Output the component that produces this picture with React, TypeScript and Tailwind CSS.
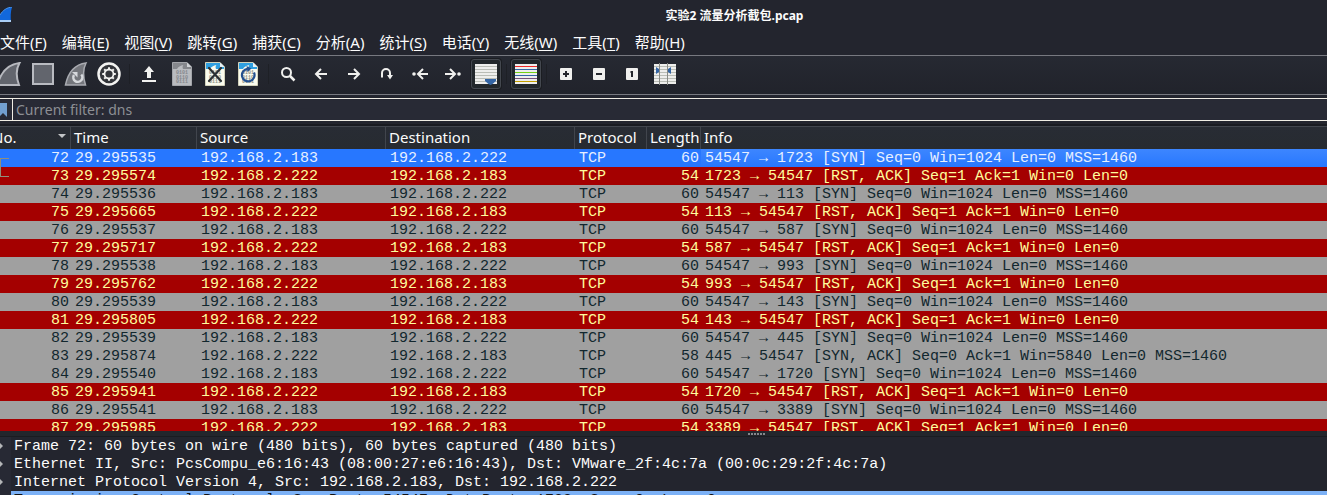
import type { ReactNode } from "react";

type Tone = "selected" | "reset" | "syn";

interface Packet {
  no: number;
  time: string;
  outbound: boolean;
  length: number;
  info: string;
  tone: Tone;
}

const SCANNER = "192.168.2.183";
const HOST = "192.168.2.222";

const packets: Packet[] = [
  { no: 72, time: "29.295535", outbound: true, length: 60, info: "54547 → 1723 [SYN] Seq=0 Win=1024 Len=0 MSS=1460", tone: "selected" },
  { no: 73, time: "29.295574", outbound: false, length: 54, info: "1723 → 54547 [RST, ACK] Seq=1 Ack=1 Win=0 Len=0", tone: "reset" },
  { no: 74, time: "29.295536", outbound: true, length: 60, info: "54547 → 113 [SYN] Seq=0 Win=1024 Len=0 MSS=1460", tone: "syn" },
  { no: 75, time: "29.295665", outbound: false, length: 54, info: "113 → 54547 [RST, ACK] Seq=1 Ack=1 Win=0 Len=0", tone: "reset" },
  { no: 76, time: "29.295537", outbound: true, length: 60, info: "54547 → 587 [SYN] Seq=0 Win=1024 Len=0 MSS=1460", tone: "syn" },
  { no: 77, time: "29.295717", outbound: false, length: 54, info: "587 → 54547 [RST, ACK] Seq=1 Ack=1 Win=0 Len=0", tone: "reset" },
  { no: 78, time: "29.295538", outbound: true, length: 60, info: "54547 → 993 [SYN] Seq=0 Win=1024 Len=0 MSS=1460", tone: "syn" },
  { no: 79, time: "29.295762", outbound: false, length: 54, info: "993 → 54547 [RST, ACK] Seq=1 Ack=1 Win=0 Len=0", tone: "reset" },
  { no: 80, time: "29.295539", outbound: true, length: 60, info: "54547 → 143 [SYN] Seq=0 Win=1024 Len=0 MSS=1460", tone: "syn" },
  { no: 81, time: "29.295805", outbound: false, length: 54, info: "143 → 54547 [RST, ACK] Seq=1 Ack=1 Win=0 Len=0", tone: "reset" },
  { no: 82, time: "29.295539", outbound: true, length: 60, info: "54547 → 445 [SYN] Seq=0 Win=1024 Len=0 MSS=1460", tone: "syn" },
  { no: 83, time: "29.295874", outbound: false, length: 58, info: "445 → 54547 [SYN, ACK] Seq=0 Ack=1 Win=5840 Len=0 MSS=1460", tone: "syn" },
  { no: 84, time: "29.295540", outbound: true, length: 60, info: "54547 → 1720 [SYN] Seq=0 Win=1024 Len=0 MSS=1460", tone: "syn" },
  { no: 85, time: "29.295941", outbound: false, length: 54, info: "1720 → 54547 [RST, ACK] Seq=1 Ack=1 Win=0 Len=0", tone: "reset" },
  { no: 86, time: "29.295541", outbound: true, length: 60, info: "54547 → 3389 [SYN] Seq=0 Win=1024 Len=0 MSS=1460", tone: "syn" },
  { no: 87, time: "29.295985", outbound: false, length: 54, info: "3389 → 54547 [RST, ACK] Seq=1 Ack=1 Win=0 Len=0", tone: "reset" },
];

const toneClass: Record<Tone, string> = {
  selected: "bg-[#2777ff] text-[#e6efff]",
  reset: "bg-[#a40000] text-[#fffc9c]",
  syn: "bg-[#a0a0a0] text-[#12272e]",
};

const menus: [string, string][] = [
  ["文件", "F"],
  ["编辑", "E"],
  ["视图", "V"],
  ["跳转", "G"],
  ["捕获", "C"],
  ["分析", "A"],
  ["统计", "S"],
  ["电话", "Y"],
  ["无线", "W"],
  ["工具", "T"],
  ["帮助", "H"],
];

const details = [
  "Frame 72: 60 bytes on wire (480 bits), 60 bytes captured (480 bits)",
  "Ethernet II, Src: PcsCompu_e6:16:43 (08:00:27:e6:16:43), Dst: VMware_2f:4c:7a (00:0c:29:2f:4c:7a)",
  "Internet Protocol Version 4, Src: 192.168.2.183, Dst: 192.168.2.222",
  "Transmission Control Protocol, Src Port: 54547, Dst Port: 1723, Seq: 0, Len: 0",
];

function Icon({ children }: { children: ReactNode }) {
  return (
    <svg width="24" height="24" viewBox="0 0 24 24" fill="none" aria-hidden="true" className="block shrink-0">
      {children}
    </svg>
  );
}

function Tool({ label, children }: { label: string; children: ReactNode }) {
  return (
    <button type="button" aria-label={label} className="flex w-[33px] shrink-0 items-center pl-1">
      <Icon>{children}</Icon>
    </button>
  );
}

function Toggle({ label, children }: { label: string; children: ReactNode }) {
  return (
    <button
      type="button"
      aria-label={label}
      aria-pressed="true"
      className="mr-0.5 ml-px flex size-[30px] shrink-0 items-center justify-center rounded-[3px] border border-[#44484f] bg-[#22272b] shadow-[0_0_0_1px_#1b1d22]"
    >
      <Icon>{children}</Icon>
    </button>
  );
}

function Separator() {
  return (
    <div className="flex w-[7px] shrink-0 justify-center">
      <div className="h-5 w-px bg-[#1e2026]" />
    </div>
  );
}

function Sheet({ muted }: { muted?: boolean }) {
  const paper = muted ? "#b9bbbf" : "#fbfbee";
  const band = muted ? "#85878c" : "#2f9fe0";
  const digit = muted ? "#85888e" : "#8e9289";
  return (
    <>
      <path d="M2.5 .5H17L21.5 5V23.5H2.5Z" fill={paper} stroke={muted ? "#a3a5aa" : "#d2d2bc"} />
      <path d="M3 1H17V5H21V7H13C12 5 13 3.500 13.500 3C10.500 3.500 8 5 7 7H3Z" fill={band} />
      <path d="M17 .5V5H21.500Z" fill={muted ? "#d0d2d5" : "#e8f2f7"} />
      <g fill={digit} fontFamily="Liberation Mono" fontWeight="700" fontSize="5">
        <text x="6" y="12">0101</text>
        <text x="6" y="16.500">0110</text>
        <text x="6" y="21">0111</text>
      </g>
    </>
  );
}

function Fin() {
  return (
    <path d="M-.5 23C2.500 11 9 2.500 21.500 1C18 7 18 15 21 23Z" fill="#62656d" stroke="#b6b8be" strokeWidth="2" />
  );
}

const gearTeeth = [0, 45, 90, 135, 180, 225, 270, 315];
const lineYs = [4, 7, 10, 13, 16, 19];
const stripes = ["#ef2929", "#3465a4", "#73d216", "#3465a4", "#75507b", "#c4a000"];

function Toolbar() {
  return (
    <div className="flex h-[39px] shrink-0 items-center border-b border-[#777980] bg-linear-to-b from-[#262932] to-[#21232b] pb-0.5">
      <div role="toolbar" aria-label="主工具栏" className="-ml-1.5 flex items-center">
        <Tool label="开始捕获">
          <Fin />
        </Tool>
        <Tool label="停止捕获">
          <rect x="2" y="2" width="20" height="20" fill="#62656d" stroke="#b9bbc1" strokeWidth="2" />
        </Tool>
        <Tool label="重新开始捕获">
          <path d="M1.500 23C4 11 10 2.500 22 1C19 7 19 15 21.500 23Z" fill="#74767c" stroke="#a9abb1" strokeWidth="1.500" />
          <path d="M17.300 12.500A4.500 4.500 0 1 1 10 13" stroke="#d6d8dc" strokeWidth="2.500" />
          <path d="M8 10H13.500V15.500Z" fill="#d6d8dc" />
        </Tool>
        <Tool label="捕获选项">
          <circle cx="12" cy="12" r="10.500" fill="#33353a" stroke="#f3f3f1" strokeWidth="2.500" />
          <circle cx="12" cy="12" r="4.500" stroke="#f3f3f1" strokeWidth="1.800" />
          {gearTeeth.map((angle) => (
            <path key={angle} d="M12 7.200V5.200" stroke="#f3f3f1" strokeWidth="2" transform={`rotate(${angle} 12 12)`} />
          ))}
        </Tool>
        <Separator />
        <Tool label="打开">
          <path d="M12 4L17 10H14V16H10V10H7Z" fill="#f2f2f0" />
          <path d="M5 18H19V20H5Z" fill="#f2f2f0" />
        </Tool>
        <Tool label="保存">
          <Sheet muted />
        </Tool>
        <Tool label="关闭">
          <Sheet />
          <path d="M6 6L18 19M18 6L6 19" stroke="#2b3033" strokeWidth="2.200" strokeLinecap="round" />
        </Tool>
        <Tool label="重新加载">
          <Sheet />
          <path d="M18 10.500A6.300 6.300 0 1 1 11.500 6.800" stroke="#24508f" strokeWidth="2.200" />
          <path d="M10.500 4L15.500 6.500L11.500 10Z" fill="#24508f" />
        </Tool>
        <Separator />
        <Tool label="查找分组">
          <circle cx="10.500" cy="10.500" r="4.500" stroke="#f0f0ee" strokeWidth="2" />
          <path d="M14 14L18.500 18.500" stroke="#f0f0ee" strokeWidth="2.500" />
        </Tool>
        <Tool label="后退">
          <path d="M18 12H7.500M12 7L7 12L12 17" stroke="#f0f0ee" strokeWidth="2" />
        </Tool>
        <Tool label="前进">
          <path d="M6 12H16.500M12 7L17 12L12 17" stroke="#f0f0ee" strokeWidth="2" />
        </Tool>
        <Tool label="转到分组">
          <path d="M7 15.500V11A4 4 0 0 1 15 11V14" stroke="#f0f0ee" strokeWidth="2" />
          <path d="M12 13H18L15 17.500Z" fill="#f0f0ee" />
        </Tool>
        <Tool label="首个分组">
          <path d="M20 12H10.500M15 7L10 12L15 17" stroke="#f0f0ee" strokeWidth="2" />
          <circle cx="6" cy="12" r="1.800" fill="#f0f0ee" />
        </Tool>
        <Tool label="最新分组">
          <path d="M4 12H13.500M9 7L14 12L9 17" stroke="#f0f0ee" strokeWidth="2" />
          <circle cx="18" cy="12" r="1.800" fill="#f0f0ee" />
        </Tool>
        <Toggle label="自动滚动">
          <rect x="1" y="2" width="22" height="20" fill="#eeeeec" />
          {lineYs.map((y) => (
            <rect key={y} x="1" y={y} width="22" height="1" fill="#babdb6" />
          ))}
          <path d="M11 17H22V19L18.500 22L16.500 23L14.500 22L11 19Z" fill="#3465a4" />
        </Toggle>
        <Separator />
        <Toggle label="着色分组">
          <rect x="1" y="2" width="22" height="20" fill="#eeeeec" />
          {lineYs.map((y, i) => (
            <rect key={y} x="1" y={y} width="22" height="1" fill={stripes[i]} />
          ))}
        </Toggle>
        <Separator />
        <Tool label="放大">
          <rect x="6" y="6" width="12" height="12" rx="1" fill="#f0f0ee" />
          <path d="M9 12H15M12 9V15" stroke="#24262c" strokeWidth="2" />
        </Tool>
        <Tool label="缩小">
          <rect x="6" y="6" width="12" height="12" rx="1" fill="#f0f0ee" />
          <path d="M9 12H15" stroke="#24262c" strokeWidth="2" />
        </Tool>
        <Tool label="正常大小">
          <rect x="6" y="6" width="12" height="12" rx="1" fill="#f0f0ee" />
          <path d="M10.500 10H12V15" stroke="#24262c" strokeWidth="2" />
        </Tool>
        <Tool label="调整列宽">
          <rect x="1" y="2" width="22" height="20" fill="#eeeeec" />
          {lineYs.map((y) => (
            <rect key={y} x="1" y={y} width="22" height="1" fill="#babdb6" />
          ))}
          <path d="M6.500 1V23M14.500 1V23" stroke="#888a85" />
          <path d="M3 5L6 7V10L3 12ZM18 5L15 7V10L18 12Z" fill="#3465a4" />
        </Tool>
      </div>
    </div>
  );
}

const th = "h-[22px] border-r border-[#41454d] p-0 pb-0.5 pl-[3px] text-left font-normal leading-5";

function PacketList() {
  return (
    <div className="relative min-h-0 flex-1 overflow-hidden border-t border-[#41454d]">
      <table className="w-full table-fixed border-separate border-spacing-0 whitespace-nowrap">
        <colgroup>
          <col className="w-[71px]" />
          <col className="w-[126px]" />
          <col className="w-[189px]" />
          <col className="w-[189px]" />
          <col className="w-[72px]" />
          <col className="w-[54px]" />
          <col />
        </colgroup>
        <thead className="bg-linear-to-b from-[#282c34] to-[#272b31] text-[15px] text-[#fcfcfc]">
          <tr>
            <th className="h-[22px] border-r border-[#41454d] p-0 pb-0.5 font-normal leading-5">
              <div className="flex items-center justify-between pr-1">
                <span className="-ml-2">No.</span>
                <svg width="8" height="4" viewBox="0 0 8 4" aria-hidden="true" className="mb-0.5">
                  <path d="M0 0H8L4 4Z" fill="#c3c5c8" />
                </svg>
              </div>
            </th>
            <th className={th}>Time</th>
            <th className={th}>Source</th>
            <th className={th}>Destination</th>
            <th className={th}>Protocol</th>
            <th className={th}>Length</th>
            <th className="p-0 pb-0.5 pl-[3px] text-left font-normal leading-5">Info</th>
          </tr>
        </thead>
        <tbody className="font-['Liberation_Mono',monospace] text-[15px] leading-[17px]">
          {packets.map((p) => (
            <tr key={p.no} className={toneClass[p.tone]}>
              <td className="p-0 pt-px pr-0.5 text-right">{p.no}</td>
              <td className="p-0 pt-px pl-1">{p.time}</td>
              <td className="p-0 pt-px pl-1">{p.outbound ? SCANNER : HOST}</td>
              <td className="p-0 pt-px pl-1">{p.outbound ? HOST : SCANNER}</td>
              <td className="p-0 pt-px pl-1">TCP</td>
              <td className="p-0 pt-px pr-0.5 text-right">{p.length}</td>
              <td className={p.tone === "selected" ? "bg-linear-to-b from-[#3d86ff] to-[#2777ff] p-0 pt-px pl-1" : "p-0 pt-px pl-1"}>
                {p.info}
              </td>
            </tr>
          ))}
        </tbody>
      </table>
      <div className="absolute top-[31px] left-0 h-[19px] w-[9px] border-y border-l border-[#8f8f7c]" />
    </div>
  );
}

export default function App() {
  return (
    <div className="flex h-screen flex-col overflow-hidden bg-[#23252e] font-['Noto_Sans','Noto_Sans_CJK_SC',sans-serif] text-[#fcfcfc]">
      <header className="relative flex h-[30px] shrink-0 items-center justify-center pt-0.5 pl-[142px]">
        <svg width="12" height="16" viewBox="0 0 12 16" aria-hidden="true" className="absolute top-[7px] left-0">
          <path d="M0 8C3 3 7 .5 12 0C10.500 5 10.500 10 11 15H0Z" fill="#1268dc" />
          <path d="M0 13H11V15H0Z" fill="#a9cdf5" />
          <path d="M0 8C3 3 7 .5 12 0" stroke="#4d97ee" fill="none" />
        </svg>
        <h1 className="text-xs font-bold">实验2 流量分析截包.pcap</h1>
      </header>

      <nav className="flex h-[26px] shrink-0 items-center gap-[15px] border-b border-[#777980] pb-0.5 text-[15px] leading-[22px]">
        {menus.map(([name, key]) => (
          <button key={key} type="button" className="shrink-0">
            {name}(<span className="underline underline-offset-2">{key}</span>)
          </button>
        ))}
      </nav>

      <Toolbar />

      <div className="mt-[3px] flex h-[23px] shrink-0 items-stretch border-y border-[#f0ede4] bg-[#282a35]">
        <button type="button" aria-label="书签" className="flex w-[13px] shrink-0 items-center border-r border-[#f0ede4]">
          <svg width="7" height="14" viewBox="0 0 7 14" aria-hidden="true">
            <path d="M0 0H7V14L3 10L0 13Z" fill="#729fcf" />
          </svg>
        </button>
        <input
          type="text"
          aria-label="显示过滤器"
          placeholder="Current filter: dns"
          className="min-w-0 flex-1 bg-transparent pl-[3px] text-sm leading-[21px] outline-none placeholder:text-[#8d8f94]"
        />
      </div>
      <div className="h-[5px] shrink-0 border-b-2 border-[#191b21]" />

      <PacketList />

      <div className="flex h-1.5 shrink-0 items-center justify-center border-b border-[#1a1c21] bg-[#23262c] pl-[186px]">
        <svg width="18" height="2" viewBox="0 0 18 2" aria-hidden="true">
          <path d="M0 1H18" stroke="#85878b" strokeWidth="2" strokeDasharray="2 1" />
        </svg>
      </div>

      <ul className="h-[58px] shrink-0 overflow-hidden font-['Liberation_Mono',monospace] text-[15px] leading-[17px] whitespace-pre">
        {details.map((line, i) => (
          <li key={line} className="flex h-[18px] items-stretch">
            <span className="flex w-[11px] shrink-0 items-center bg-[#272934]">
              <svg width="3" height="6" viewBox="0 0 3 6" aria-hidden="true">
                <path d="M0 0L3 3L0 6Z" fill="#b4b6b8" />
              </svg>
            </span>
            <span className={i === 3 ? "flex-1 bg-[#7cb1f6] pt-px pl-[3px] text-[#101216]" : "flex-1 pt-px pl-[3px]"}>{line}</span>
          </li>
        ))}
      </ul>
    </div>
  );
}
